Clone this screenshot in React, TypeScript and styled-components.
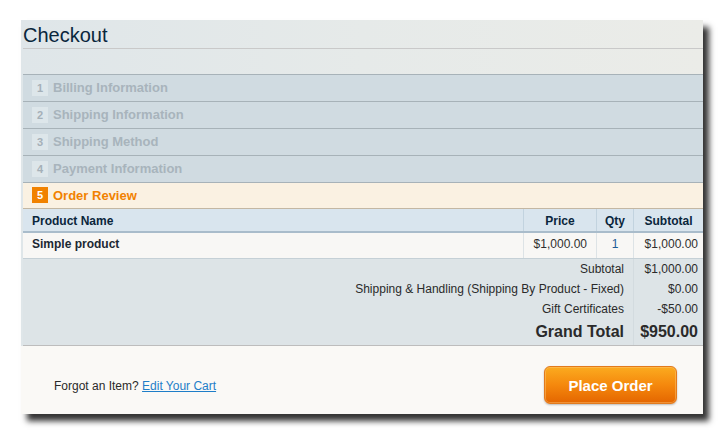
import React from 'react';
import styled, { createGlobalStyle } from 'styled-components';

const GlobalStyle = createGlobalStyle`
  html, body {
    margin: 0;
    padding: 0;
    background: #fff;
  }
  body {
    font-family: 'Liberation Sans', Arial, sans-serif;
    font-size: 12px;
    color: #2f2f2f;
  }
`;

const Page = styled.div`
  padding: 20px 0 0 21px;
  width: 724px;
  height: 438px;
  box-sizing: border-box;
`;

const CheckoutBlock = styled.div`
  width: 682px;
  padding-left: 2px;
  box-sizing: border-box;
  background: linear-gradient(90deg, #dfe6e9 0%, #e6eae9 50%, #ebece8 100%);
  box-shadow: 6px 7px 6px rgba(0, 0, 0, 0.8);
`;

const PageTitle = styled.h1`
  margin: 0;
  padding: 3px 0 1px;
  line-height: 24px;
  font-size: 20px;
  font-weight: normal;
  color: #0a263c;
  border-bottom: 1px solid #c9c9c9;
`;

const StepList = styled.ol`
  list-style: none;
  margin: 25px 0 0;
  padding: 0;
  border-top: 1px solid #a7b2b8;
`;

const Step = styled.li<{ $active?: boolean }>`
  display: flex;
  align-items: center;
  gap: 5px;
  height: ${(p) => (p.$active ? '24px' : '25px')};
  padding: 0 0 1px 9px;
  background: ${(p) => (p.$active ? '#faf1e2' : '#d0dbe1')};
  border-bottom: 1px solid ${(p) => (p.$active ? '#c3b7a3' : '#a7b2b8')};
  font-size: 13px;
  font-weight: bold;
  color: ${(p) => (p.$active ? '#f18200' : '#a8b4bc')};
`;

const StepNumber = styled.span<{ $active?: boolean }>`
  display: inline-flex;
  align-items: center;
  justify-content: center;
  width: 16px;
  height: 16px;
  font-size: 11px;
  font-weight: bold;
  background: ${(p) => (p.$active ? '#f18200' : '#dde6ea')};
  color: ${(p) => (p.$active ? '#fff' : '#a5b0b8')};
`;

const COLUMNS = '1fr 73px 37px 70px';

const TableHead = styled.div`
  display: grid;
  grid-template-columns: ${COLUMNS};
  height: 22px;
  background: #d9e5ee;
  border-bottom: 2px solid #a9bccb;
`;

const HeadCell = styled.div<{ $align?: string }>`
  display: flex;
  align-items: center;
  justify-content: ${(p) => p.$align || 'center'};
  padding: 1px 9px 0;
  font-weight: bold;
  color: #0a263c;
  & + & {
    border-left: 1px solid #c2d3df;
  }
`;

const TableRow = styled.div`
  display: grid;
  grid-template-columns: ${COLUMNS};
  height: 25px;
  background: #f8f7f5;
  border-bottom: 1px solid #c5d0d6;
`;

const Cell = styled.div<{ $align?: string; $pr?: number; $bold?: boolean; $link?: boolean }>`
  display: flex;
  align-items: center;
  justify-content: ${(p) => p.$align || 'flex-end'};
  padding: 0 ${(p) => p.$pr ?? 9}px 3px 9px;
  font-weight: ${(p) => (p.$bold ? 'bold' : 'normal')};
  color: ${(p) => (p.$bold ? '#1b2833' : p.$link ? '#1e5c96' : '#2f2f2f')};
  & + & {
    border-left: 1px solid #dde3e6;
  }
`;

const Totals = styled.div`
  display: grid;
  grid-template-columns: 1fr 70px;
  grid-template-rows: repeat(3, 20px) 26px;
  background: #dde4e7;
  border-bottom: 1px solid #bdbdbd;
`;

const TotalLabel = styled.div<{ $grand?: boolean }>`
  display: flex;
  align-items: center;
  justify-content: flex-end;
  padding-right: 9px;
  font-size: ${(p) => (p.$grand ? '16px' : '12px')};
  font-weight: ${(p) => (p.$grand ? 'bold' : 'normal')};
  color: #2a2a2a;
`;

const TotalValue = styled(TotalLabel)`
  padding-right: 5px;
  border-left: 1px solid #d3dbdf;
`;

const ReviewFooter = styled.div`
  display: flex;
  align-items: center;
  justify-content: space-between;
  height: 68px;
  padding: 10px 26px 0 33px;
  margin-left: -2px;
  box-sizing: border-box;
  background: #faf9f6;
`;

const ForgotText = styled.p`
  margin: 2px 0 0;
  font-size: 12px;
  color: #2a2a2a;

  a {
    color: #1e7ec8;
    text-decoration: underline;
  }
`;

const PlaceOrderButton = styled.button`
  width: 133px;
  height: 38px;
  border: 1px solid #e27a1c;
  border-radius: 6px;
  background: linear-gradient(180deg, #fbab1f 0%, #f5880d 50%, #e46600 100%);
  box-shadow: inset 0 0 0 1px rgba(255, 200, 120, 0.45), 0 1px 2px rgba(0, 0, 0, 0.25);
  color: #fff;
  font-family: 'Liberation Sans', Arial, sans-serif;
  font-size: 15px;
  font-weight: bold;
  cursor: pointer;
`;

const steps = [
  'Billing Information',
  'Shipping Information',
  'Shipping Method',
  'Payment Information',
  'Order Review',
];

const totals = [
  { label: 'Subtotal', value: '$1,000.00' },
  { label: 'Shipping & Handling (Shipping By Product - Fixed)', value: '$0.00' },
  { label: 'Gift Certificates', value: '-$50.00' },
];

const App = () => {
  return (
    <Page>
      <GlobalStyle />
      <CheckoutBlock>
        <PageTitle>Checkout</PageTitle>
        <StepList>
          {steps.map((name, i) => {
            const active = i === steps.length - 1;
            return (
              <Step key={name} $active={active}>
                <StepNumber $active={active}>{i + 1}</StepNumber>
                {name}
              </Step>
            );
          })}
        </StepList>
        <TableHead>
          <HeadCell $align="flex-start">Product Name</HeadCell>
          <HeadCell>Price</HeadCell>
          <HeadCell>Qty</HeadCell>
          <HeadCell>Subtotal</HeadCell>
        </TableHead>
        <TableRow>
          <Cell $align="flex-start" $bold>
            Simple product
          </Cell>
          <Cell>$1,000.00</Cell>
          <Cell $align="center" $link>
            1
          </Cell>
          <Cell $pr={5}>$1,000.00</Cell>
        </TableRow>
        <Totals>
          {totals.map((row) => (
            <React.Fragment key={row.label}>
              <TotalLabel>{row.label}</TotalLabel>
              <TotalValue>{row.value}</TotalValue>
            </React.Fragment>
          ))}
          <TotalLabel $grand>Grand Total</TotalLabel>
          <TotalValue $grand>$950.00</TotalValue>
        </Totals>
        <ReviewFooter>
          <ForgotText>
            Forgot an Item? <a href="#cart">Edit Your Cart</a>
          </ForgotText>
          <PlaceOrderButton type="button">Place Order</PlaceOrderButton>
        </ReviewFooter>
      </CheckoutBlock>
    </Page>
  );
};

export default App;
